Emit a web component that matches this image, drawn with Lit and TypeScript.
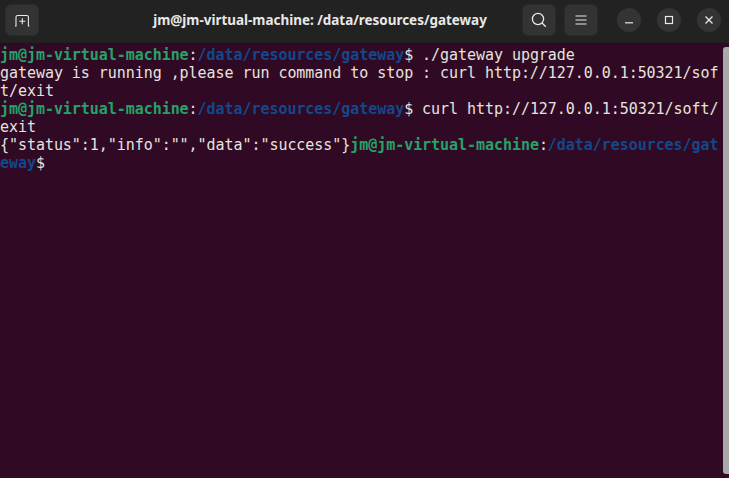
import { LitElement, html, css } from "lit";
import { customElement } from "lit/decorators.js";

const PROMPT_USER = "jm@jm-virtual-machine";

@customElement("app-root")
export class AppRoot extends LitElement {
  static styles = css`
    :host { display: block; width: 729px; height: 478px; overflow: hidden; background: #300a24; }
    .win { display: flex; flex-direction: column; height: 478px; position: relative; }
    .bar { height: 43px; flex: none; background: #222222; display: flex; align-items: center; padding: 0 8px 3px 5px; box-sizing: border-box; border-bottom: 1px solid #1f1f1f; }
    .btn { width: 34px; height: 32px; box-sizing: border-box; border-radius: 6px; background: #333333; border: 1px solid #2b2b2b; display: flex; align-items: center; justify-content: center; flex: none; }
    .btn svg, .wc svg { display: block; }
    .title { flex: 1; text-align: center; color: #e8e8e8; font: 700 13.45px "Noto Sans", "Open Sans", sans-serif; white-space: nowrap; padding-left: 79px; }
    .right { display: flex; gap: 8px; flex: none; }
    .wcs { display: flex; gap: 16px; margin-left: 19px; flex: none; }
    .wc { width: 24px; height: 24px; border-radius: 50%; background: #343434; display: flex; align-items: center; justify-content: center; }
    .term { flex: 1; padding-top: 3px; font: 15px/18px "DejaVu Sans Mono", monospace; color: #e6e3df; background: #300a24; }
    .row { height: 18px; white-space: pre; letter-spacing: -0.05px; }
    .u { color: #26a269; font-weight: 700; }
    .p { color: #12488b; font-weight: 700; }
    .sb { position: absolute; right: 0; top: 47px; bottom: 4px; width: 6px; background: #a9a9a9; border-radius: 3px 0 0 3px; }
  `;
  render() {
    const user = html`<span class="u">${PROMPT_USER}</span>:<span class="p">/data/resources/gateway</span>$`;
    return html`<div class="win">
      <div class="bar">
        <div class="btn">
          <svg width="16" height="16" viewBox="0 0 16 16" fill="none" stroke="#e8e8e8" stroke-width="1.1">
            <path d="M1 14h1V5a1.5 1.5 0 0 1 1.5-1.5h9.4A1.5 1.5 0 0 1 14.4 5v9h1" />
            <path d="M8.3 6.3v6M5.3 9.3h6" />
          </svg>
        </div>
        <div class="title">jm@jm-virtual-machine: /data/resources/gateway</div>
        <div class="right">
          <div class="btn">
            <svg width="16" height="16" viewBox="0 0 16 16" fill="none" stroke="#e8e8e8" stroke-width="1.3">
              <circle cx="7" cy="7" r="5.6" /><path d="M11 11l3.8 3.8" />
            </svg>
          </div>
          <div class="btn">
            <svg width="16" height="16" viewBox="0 0 16 16" fill="none" stroke="#e8e8e8" stroke-width="1.1">
              <path d="M2.5 4h11M2.5 8h11M2.5 12h11" />
            </svg>
          </div>
        </div>
        <div class="wcs">
          <div class="wc"><svg width="10" height="10" viewBox="0 0 10 10" fill="none" stroke="#e8e8e8" stroke-width="1.2"><path d="M1 7.8h8"/></svg></div>
          <div class="wc"><svg width="10" height="10" viewBox="0 0 10 10" fill="none" stroke="#e8e8e8" stroke-width="1.2"><rect x="1.5" y="1.5" width="7" height="7"/></svg></div>
          <div class="wc"><svg width="10" height="10" viewBox="0 0 10 10" fill="none" stroke="#e8e8e8" stroke-width="1.3"><path d="M1.5 1.5l7 7M8.5 1.5l-7 7"/></svg></div>
        </div>
      </div>
      <div class="term">
        <div class="row">${user} ./gateway upgrade</div>
        <div class="row">gateway is running ,please run command to stop : curl http://127.0.0.1:50321/sof</div>
        <div class="row">t/exit</div>
        <div class="row">${user} curl http://127.0.0.1:50321/soft/</div>
        <div class="row">exit</div>
        <div class="row">{"status":1,"info":"","data":"success"}<span class="u">${PROMPT_USER}</span>:<span class="p">/data/resources/gat</span></div>
        <div class="row"><span class="p">eway</span>$</div>
      </div>
      <div class="sb"></div>
    </div>`;
  }
}
